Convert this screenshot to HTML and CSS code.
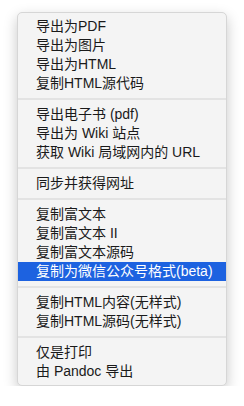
FILE: index.html
```html
<!DOCTYPE html>
<html lang="zh-CN">
<head>
    <meta charset="UTF-8">
    <meta name="viewport" content="width=device-width, initial-scale=1.0">
    <title>导出菜单</title>
    <link rel="stylesheet" href="styles.css">
</head>
<body>
    <ul class="menu">
        <li class="item">导出为PDF</li>
        <li class="item">导出为图片</li>
        <li class="item">导出为HTML</li>
        <li class="item">复制HTML源代码</li>
        <li class="sep"></li>
        <li class="item">导出电子书 (pdf)</li>
        <li class="item">导出为 Wiki 站点</li>
        <li class="item">获取 Wiki 局域网内的 URL</li>
        <li class="sep"></li>
        <li class="item">同步并获得网址</li>
        <li class="sep"></li>
        <li class="item">复制富文本</li>
        <li class="item">复制富文本 II</li>
        <li class="item">复制富文本源码</li>
        <li class="item active">复制为微信公众号格式(beta)</li>
        <li class="sep"></li>
        <li class="item">复制HTML内容(无样式)</li>
        <li class="item">复制HTML源码(无样式)</li>
        <li class="sep"></li>
        <li class="item">仅是打印</li>
        <li class="item">由 Pandoc 导出</li>
    </ul>
</body>
</html>
```

FILE: styles.css
```css
body {
    margin: 0;
    background: #ffffff;
    font-family: "Liberation Sans", "Noto Sans CJK SC", sans-serif;
}
.menu {
    list-style: none;
    box-sizing: border-box;
    width: 210px;
    margin: 12px 0 0 17px;
    padding: 4px 0;
    background: #f4f4f4;
    border: 1px solid #d6d6d6;
    border-radius: 5px;
    box-shadow: 0 5px 14px rgba(0, 0, 0, 0.22);
}
.item {
    height: 19px;
    line-height: 19px;
    padding-left: 18px;
    font-size: 14px;
    color: #1a1a1a;
    white-space: nowrap;
}
.item.active {
    background: #1d62e0;
    color: #ffffff;
}
.sep {
    height: 2px;
    margin: 5px 0;
    background: #e3e3e3;
}
```
